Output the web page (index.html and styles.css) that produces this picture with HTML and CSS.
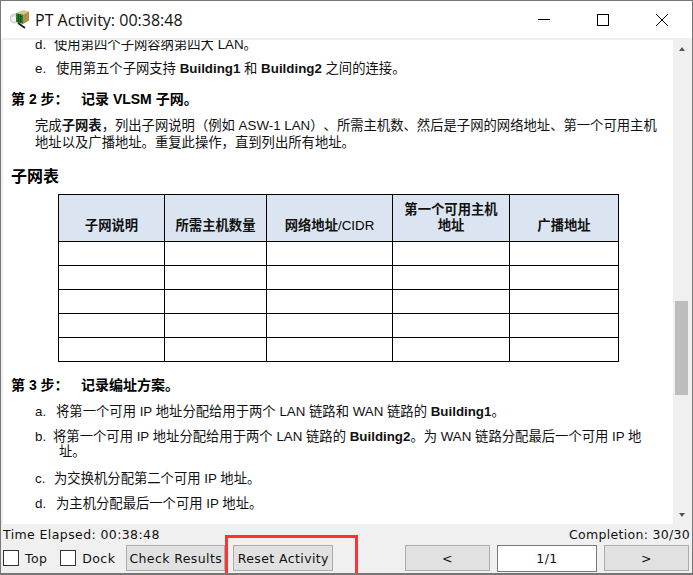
FILE: index.html
```html
<!DOCTYPE html>
<html lang="zh">
<head>
<meta charset="utf-8">
<title>PT Activity</title>
<link rel="stylesheet" href="styles.css">
</head>
<body>
<div class="window">
  <header class="titlebar">
    <svg class="app-icon" width="20" height="20" viewBox="0 0 20 20">
      <circle cx="4.500" cy="8.500" r="4.500" fill="#dcdcdc" stroke="#b0b0b0" stroke-width=".6"/>
      <circle cx="4" cy="9" r="2.500" fill="#f6f6f6"/>
      <path d="M8 13l7 5" stroke="#1c1c1c" stroke-width="1.800"/>
      <path d="M13 4.500l6-3v9l-6 3.500z" fill="#b08d4e"/>
      <path d="M6 3l7-3 6 1.500-6 3z" fill="#dfc088"/>
      <path d="M6 3l7 1.500v9.500l-7-2z" fill="#2f8a33"/>
      <path d="M6.500 5.500l6 1.200M6.500 8l6 1.200M6.500 10.500l6 1.200M8.500 4v8.500M10.500 4.500v8.500" stroke="#0b4a15" stroke-width=".8"/>
    </svg>
    <span class="title">PT Activity: 00:38:48</span>
    <div class="controls">
      <svg width="14" height="14" viewBox="0 0 14 14"><path d="M1 6.500h12" stroke="#000"/></svg>
      <svg width="14" height="14" viewBox="0 0 14 14"><rect x="1.500" y="1.500" width="11" height="11" fill="none" stroke="#000"/></svg>
      <svg width="14" height="14" viewBox="0 0 14 14"><path d="M1 1l12 12M13 1L1 13" stroke="#000"/></svg>
    </div>
  </header>
  <div class="viewer">
    <main class="doc">
      <div class="doc-inner">
        <p class="item item-clip"><span class="mark">d.</span>使用第四个子网容纳第四大 LAN。</p>
        <p class="item"><span class="mark wide">e.</span>使用第五个子网支持 <b>Building1</b> 和 <b>Building2</b> 之间的连接。</p>
        <h3 class="step"><span class="step-no">第 2 步：</span>记录 VLSM 子网。</h3>
        <p class="para">完成<b>子网表</b>，列出子网说明（例如 ASW-1 LAN）、所需主机数、然后是子网的网络地址、第一个可用主机地址以及广播地址。重复此操作，直到列出所有地址。</p>
        <h2 class="table-title">子网表</h2>
        <table class="subnets">
          <colgroup><col class="c1"><col class="c2"><col class="c3"><col class="c4"><col class="c5"></colgroup>
          <thead>
            <tr><th>子网说明</th><th>所需主机数量</th><th>网络地址<span class="latin">/CIDR</span></th><th>第一个可用主机地址</th><th>广播地址</th></tr>
          </thead>
          <tbody>
            <tr><td></td><td></td><td></td><td></td><td></td></tr>
            <tr><td></td><td></td><td></td><td></td><td></td></tr>
            <tr><td></td><td></td><td></td><td></td><td></td></tr>
            <tr><td></td><td></td><td></td><td></td><td></td></tr>
            <tr><td></td><td></td><td></td><td></td><td></td></tr>
          </tbody>
        </table>
        <h3 class="step step3"><span class="step-no">第 3 步：</span>记录编址方案。</h3>
        <p class="item"><span class="mark wide">a.</span>将第一个可用 IP 地址分配给用于两个 LAN 链路和 WAN 链路的 <b>Building1</b>。</p>
        <p class="item hang"><span class="mark">b.</span>将第一个可用 IP 地址分配给用于两个 LAN 链路的 <b>Building2</b>。为 WAN 链路分配最后一个可用 IP 地址。</p>
        <p class="item"><span class="mark">c.</span>为交换机分配第二个可用 IP 地址。</p>
        <p class="item"><span class="mark wide">d.</span>为主机分配最后一个可用 IP 地址。</p>
      </div>
    </main>
    <aside class="scrollbar">
      <span class="arrow up"></span>
      <span class="thumb"></span>
      <span class="arrow down"></span>
    </aside>
  </div>
  <footer class="footer">
    <div class="status"><span>Time Elapsed: 00:38:48</span><span class="completion">Completion: 30/30</span></div>
    <div class="actions">
      <label class="check"><span class="box"></span>Top</label>
      <label class="check"><span class="box"></span>Dock</label>
      <button class="btn">Check Results</button>
      <button class="btn">Reset Activity</button>
      <div class="pager">
        <button class="btn nav">&lt;</button>
        <span class="page">1/1</span>
        <button class="btn nav">&gt;</button>
      </div>
    </div>
  </footer>
  <div class="highlight"></div>
</div>
</body>
</html>
```
FILE: styles.css
```css
* { box-sizing: border-box; }
html, body { margin: 0; padding: 0; }
body { width: 693px; height: 575px; overflow: hidden; background: #f0f0f0; }
.window {
  position: relative;
  width: 693px;
  height: 575px;
  display: flex;
  flex-direction: column;
  background: #f0f0f0;
  border: 1px solid #777;
  border-bottom-width: 2px;
}
.titlebar {
  height: 37px;
  flex: none;
  background: #fff;
  display: flex;
  align-items: center;
  padding: 0 0 0 9px;
}
.app-icon { flex: none; margin-top: 1px; }
.title {
  margin-left: 5px;
  font: 16px "Open Sans", "Noto Sans", sans-serif;
  color: #111;
}
.controls {
  margin-left: auto;
  display: flex;
  align-items: center;
  gap: 45px;
  padding-right: 23px;
  margin-top: 1px;
}
.controls svg { display: block; }
.viewer {
  margin: 2px 0 0 2px;
  height: 484px;
  flex: none;
  display: flex;
}
.doc {
  flex: 1;
  min-width: 0;
  background: #fff;
  overflow: hidden;
  font: 13.33px/18px "Liberation Sans", "Noto Sans CJK SC", sans-serif;
  color: #111;
  text-spacing-trim: space-all;
}
.doc-inner { margin-top: -4px; padding: 0 15px 0 8px; }
.doc p, .doc h2, .doc h3 { margin: 0; }
.item { padding-left: 24px; margin-bottom: 7px !important; }
.item-clip { height: 18px; margin-bottom: 6px !important; }
.mark { display: inline-block; width: 19px; }
.mark.wide { width: 21px; }
.hang {
  padding-left: 48px;
  text-indent: -24px;
  line-height: 15px;
  margin-top: 8px !important;
  margin-bottom: 11px !important;
}
.hang .mark { text-indent: 0; width: 18px; }
.step {
  font: bold 14px/20px "Liberation Sans", "Noto Sans CJK SC", sans-serif;
  color: #000;
  margin-top: 11px !important;
}
.step-no { display: inline-block; width: 70px; }
.para { padding-left: 24px; margin-top: 8px !important; line-height: 17px; }
.table-title {
  font: bold 16px/22px "Liberation Sans", "Noto Sans CJK SC", sans-serif;
  color: #000;
  margin-top: 15px !important;
}
.subnets {
  margin: 6px 0 0 47px;
  border-collapse: collapse;
  table-layout: fixed;
  width: 560px;
}
.c1 { width: 106px; }
.c2 { width: 102px; }
.c3 { width: 126px; }
.c4 { width: 117px; }
.c5 { width: 109px; }
.subnets th, .subnets td { border: 1px solid #000; padding: 0; }
.subnets th {
  height: 47px;
  background: #dbe5f1;
  font: bold 13.33px/16px "Liberation Sans", "Noto Sans CJK SC", sans-serif;
  vertical-align: bottom;
  padding: 0 8px 7px;
  color: #111;
}
.latin { font-weight: normal; color: #000; }
.subnets td { height: 24px; }
.step3 { margin-top: 13px !important; margin-bottom: 8px !important; }
.scrollbar {
  width: 19px;
  flex: none;
  background: #f0f0f0;
  position: relative;
  display: flex;
  flex-direction: column;
  align-items: center;
  justify-content: space-between;
  padding: 7px 2px 7px 0;
}
.arrow { width: 0; height: 0; border: 3.500px solid transparent; }
.arrow.up { border-bottom: 4px solid #555; border-top: 0; }
.arrow.down { border-top: 4px solid #555; border-bottom: 0; }
.thumb {
  position: absolute;
  left: 2px;
  top: 261px;
  width: 13px;
  height: 94px;
  background: #bdbdbd;
}
.footer {
  flex: 1;
  padding: 0 3px 0 2px;
  font: 12.500px "DejaVu Sans", sans-serif;
  letter-spacing: .4px;
  color: #111;
}
.status {
  display: flex;
  justify-content: space-between;
  height: 20px;
  align-items: center;
  padding-top: 1px;
}
.completion { letter-spacing: .3px; margin-right: -1px; }
.actions { display: flex; align-items: center; height: 28px; }
.check { display: flex; align-items: center; gap: 6px; margin-right: 13px; }
.check + .check { margin-right: 11px; }
.box { width: 16px; height: 16px; border: 1px solid #333; background: #fff; }
.btn {
  font: inherit;
  letter-spacing: inherit;
  color: inherit;
  height: 26px;
  padding: 0;
  width: 99px;
  background: #e1e1e1;
  border: 1px solid #adadad;
  margin-right: 8px;
}
.btn + .btn { width: 100px; margin-right: 0; }
.pager { margin-left: auto; display: flex; align-items: center; gap: 7px; }
.pager .btn { width: 85px; margin: 0; background: #e1e1e1; }
.page {
  width: 100px;
  height: 27px;
  background: #fff;
  border: 1px solid #7a7a7a;
  display: flex;
  align-items: center;
  justify-content: center;
}
.highlight {
  position: absolute;
  left: 224px;
  top: 534px;
  width: 133px;
  height: 38px;
  border: 3px solid #f33;
  border-bottom: 0;
}
```
